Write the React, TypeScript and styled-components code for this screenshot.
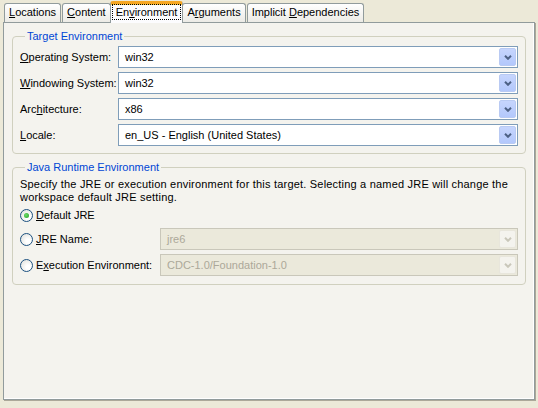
import React from "react";
import styled, { createGlobalStyle, css } from "styled-components";

const GlobalStyle = createGlobalStyle`
	html, body {
		margin: 0;
		padding: 0;
		background: #ece9d8;
	}
	body {
		font-family: "Liberation Sans", Arial, sans-serif;
		font-size: 11px;
		color: #000;
	}
`;

const Page = styled.div`
	width: 538px;
	height: 408px;
	padding: 1px 3px 0 3px;
	box-sizing: border-box;
	display: flex;
	flex-direction: column;
`;

const TabBar = styled.div`
	display: flex;
	align-items: flex-end;
	height: 21px;
	padding-left: 1px;
	position: relative;
	z-index: 1;
`;

const Tab = styled.div<{ $active?: boolean }>`
	height: 19px;
	box-sizing: border-box;
	padding: 2px 4px 0 4px;
	margin-right: 1px;
	border: 1px solid #919b9c;
	border-bottom: none;
	border-radius: 3px 3px 0 0;
	background: linear-gradient(#ffffff, #ecebe6);
	white-space: nowrap;
	${(p) =>
		p.$active &&
		css`
			height: 22px;
			margin: 0 -1px -1px -2px;
			padding: 1px 2px 0 2px;
			background: #fcfcfe;
			border-top: 3px solid #f5a623;
			box-shadow: inset 0 1px 0 #ffc83c;
		`}
`;

const Focus = styled.span`
	display: inline-block;
	outline: 1px dotted #000;
	padding: 0 3px;
	line-height: 14px;
`;

const Panel = styled.div`
	margin-bottom: 8px;
	height: 378px;
	box-sizing: border-box;
	border: 1px solid #919b9c;
	background: #f4f3ee;
	box-shadow: inset -1px -1px 0 #fff, 1px 1px 0 #aca899;
	padding: 7px 8px 0 8px;
	display: flex;
	flex-direction: column;
	gap: 7px;
`;

const Group = styled.fieldset<{ $bottom?: number }>`
	margin: 0;
	border: 1px solid #d0d0bf;
	border-radius: 4px;
	padding: 3px 7px ${(p) => p.$bottom ?? 7}px 7px;
	min-width: 0;
`;

const Legend = styled.legend`
	color: #0046d5;
	padding: 0 2px;
	margin-left: 5px;
	line-height: 13px;
`;

const FormGrid = styled.div`
	display: grid;
	grid-template-columns: 98px 1fr;
	row-gap: 4px;
	align-items: center;
`;

const Label = styled.label`
	white-space: nowrap;
`;

const U = styled.span`
	text-decoration: underline;
`;

const ComboBox = styled.div<{ $disabled?: boolean }>`
	height: 22px;
	box-sizing: border-box;
	border: 1px solid #7f9db9;
	background: #fff;
	display: flex;
	align-items: center;
	padding: 1px 1px 1px 6px;
	${(p) =>
		p.$disabled &&
		css`
			border-color: #c9c7ba;
			background: #ebe9db;
			color: #aca899;
		`}
`;

const ComboText = styled.span`
	flex: 1;
	white-space: nowrap;
`;

const DropButton = styled.div<{ $disabled?: boolean }>`
	width: 17px;
	height: 18px;
	box-sizing: border-box;
	border: 1px solid #b9caf3;
	border-radius: 2px;
	background: linear-gradient(#c6d5fd, #b3c8fc);
	display: flex;
	align-items: center;
	justify-content: center;
	${(p) =>
		p.$disabled &&
		css`
			border-color: #e8e6dc;
			background: #f4f3ee;
		`}
`;

const Description = styled.div`
	line-height: 13px;
	letter-spacing: 0.2px;
	margin: 1px 0 2px 0;
`;

const RadioGrid = styled.div`
	display: grid;
	grid-template-columns: 140px 1fr;
	row-gap: 4px;
	align-items: center;
`;

const RadioRow = styled.div`
	display: flex;
	align-items: center;
	gap: 3px;
	height: 18px;
	white-space: nowrap;
`;

const RadioCircle = styled.span<{ $checked?: boolean }>`
	width: 13px;
	height: 13px;
	box-sizing: border-box;
	border-radius: 50%;
	border: 1px solid #1c5180;
	background: radial-gradient(circle at 65% 65%, #ffffff 20%, #dcdcd7 100%);
	display: flex;
	align-items: center;
	justify-content: center;
	&::after {
		content: "";
		width: 5px;
		height: 5px;
		border-radius: 50%;
		background: ${(p) => (p.$checked ? "radial-gradient(circle at 40% 40%, #6fdc6b, #21a121)" : "transparent")};
	}
`;

const Chevron = ({ disabled }: { disabled?: boolean }) => (
	<svg width="8" height="5" viewBox="0 0 8 5">
		<path d="M1 0.8 L4 3.8 L7 0.8" fill="none" stroke={disabled ? "#c9c7ba" : "#4d6185"} strokeWidth="2" />
	</svg>
);

const Combo = ({ value, disabled }: { value: string; disabled?: boolean }) => (
	<ComboBox $disabled={disabled}>
		<ComboText>{value}</ComboText>
		<DropButton $disabled={disabled}>
			<Chevron disabled={disabled} />
		</DropButton>
	</ComboBox>
);

const Spacer = styled.div``;

export default function App() {
	return (
		<Page>
			<GlobalStyle />
			<TabBar>
				<Tab>
					<U>L</U>ocations
				</Tab>
				<Tab>
					<U>C</U>ontent
				</Tab>
				<Tab $active>
					<Focus>
						En<U>v</U>ironment
					</Focus>
				</Tab>
				<Tab>
					A<U>r</U>guments
				</Tab>
				<Tab>
					Implicit <U>D</U>ependencies
				</Tab>
			</TabBar>
			<Panel>
				<Group>
					<Legend>Target Environment</Legend>
					<FormGrid>
						<Label>
							<U>O</U>perating System:
						</Label>
						<Combo value="win32" />
						<Label>
							<U>W</U>indowing System:
						</Label>
						<Combo value="win32" />
						<Label>
							Arc<U>h</U>itecture:
						</Label>
						<Combo value="x86" />
						<Label>
							<U>L</U>ocale:
						</Label>
						<Combo value="en_US - English (United States)" />
					</FormGrid>
				</Group>
				<Group $bottom={8}>
					<Legend>Java Runtime Environment</Legend>
					<Description>
						Specify the JRE or execution environment for this target. Selecting a named JRE will change the
						<br />
						workspace default JRE setting.
					</Description>
					<RadioGrid>
						<RadioRow>
							<RadioCircle $checked />
							<span>
								<U>D</U>efault JRE
							</span>
						</RadioRow>
						<Spacer />
						<RadioRow>
							<RadioCircle />
							<span>
								<U>J</U>RE Name:
							</span>
						</RadioRow>
						<Combo value="jre6" disabled />
						<RadioRow>
							<RadioCircle />
							<span>
								E<U>x</U>ecution Environment:
							</span>
						</RadioRow>
						<Combo value="CDC-1.0/Foundation-1.0" disabled />
					</RadioGrid>
				</Group>
			</Panel>
		</Page>
	);
}
